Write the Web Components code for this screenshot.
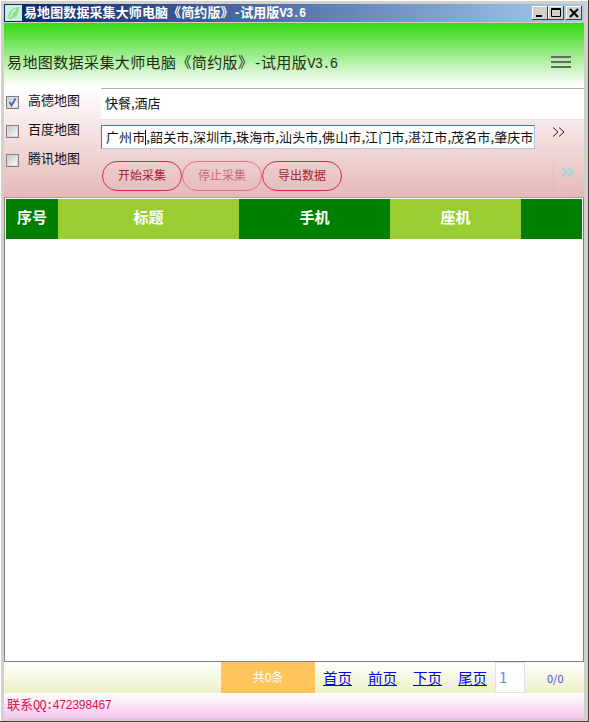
<!DOCTYPE html>
<html lang="zh">
<head>
<meta charset="utf-8">
<title>易地图数据采集大师电脑</title>
<style>
html, body { margin: 0; padding: 0; }
body { font-family: "Noto Sans CJK SC", sans-serif; }
/* half-width latin of the original bitmap font */
.lat { font-family: "Liberation Mono", monospace; font-size: .92em; letter-spacing: -.055em; }
</style>
</head>
<body>
<app-window>
    <title-bar slot="title">易地图数据采集大师电脑《简约版》<span class="lat">-</span>试用版<span class="lat">V3.6</span></title-bar>
    <app-header>易地图数据采集大师电脑《简约版》<span class="lat">-</span>试用版<span class="lat">V3.6</span></app-header>
    <search-panel></search-panel>
    <data-grid></data-grid>
    <pager-bar></pager-bar>
    <status-bar>联系<span class="lat">QQ:472398467</span></status-bar>
</app-window>

<script>
const FONT = '"Noto Sans CJK SC", "Liberation Sans", sans-serif';

class AppWindow extends HTMLElement {
    connectedCallback() {
        this.attachShadow({ mode: 'open' });
        this.shadowRoot.innerHTML = `
            <style>
                :host {
                    display: flex;
                    flex-direction: column;
                    box-sizing: border-box;
                    width: 589px;
                    height: 722px;
                    padding: 4px 4px 2px 4px;
                    background: #d4d0c8;
                    border-right: 1px solid #404040;
                    border-bottom: 1px solid #404040;
                    box-shadow: inset 1px 1px 0 #fff;
                    font-family: ${FONT};
                    overflow: hidden;
                }
            </style>
            <slot name="title"></slot>
            <slot></slot>
        `;
    }
}

class TitleBar extends HTMLElement {
    connectedCallback() {
        this.attachShadow({ mode: 'open' });
        this.shadowRoot.innerHTML = `
            <style>
                :host {
                    display: flex;
                    align-items: center;
                    flex: 0 0 18px;
                    height: 18px;
                    margin-bottom: 1px;
                    padding: 0 2px 0 0;
                    background: linear-gradient(90deg, #0a246a, #a6caf0);
                    color: #fff;
                    font-size: 13px;
                    font-weight: 700;
                    letter-spacing: .1px;
                    line-height: 18px;
                    white-space: nowrap;
                }
                svg { flex: none; margin: 0 2px 0 1px; }
                .text { flex: 1; }
                .btns { display: flex; }
                .btn {
                    box-sizing: border-box;
                    width: 16px;
                    height: 14px;
                    background: #d4d0c8;
                    box-shadow: inset -1px -1px 0 #404040, inset 1px 1px 0 #fff;
                }
                .btn svg { display: block; margin: 0; }
                .btn + .btn:last-child { margin-left: 2px; }
            </style>
            <svg width="17" height="16" viewBox="0 0 17 16">
                <rect width="17" height="16" fill="#c9f0d2"/>
                <path d="M4 14C2 9 6 3 14 2c0 5-2 10-6 11-1 .4-3 .6-4 1z" fill="#8fdc9c"/>
                <path d="M6 12C6 8 8 6 11 4.500" stroke="#d8f8dc" stroke-width="1.500" fill="none"/>
            </svg>
            <span class="text"><slot></slot></span>
            <div class="btns">
                <div class="btn"><svg width="16" height="14"><rect x="4" y="9" width="6" height="2" fill="#000"/></svg></div>
                <div class="btn"><svg width="16" height="14"><path d="M3.500 2.500h9v8h-9zM3 3.500h10" fill="none" stroke="#000"/></svg></div>
                <div class="btn"><svg width="16" height="14"><path d="M4 3l8 8M12 3l-8 8" fill="none" stroke="#000" stroke-width="2"/></svg></div>
            </div>
        `;
    }
}

class AppHeader extends HTMLElement {
    connectedCallback() {
        this.attachShadow({ mode: 'open' });
        this.shadowRoot.innerHTML = `
            <style>
                :host {
                    display: flex;
                    align-items: center;
                    justify-content: space-between;
                    flex: 0 0 64px;
                    box-sizing: border-box;
                    padding: 13px 13px 0 3px;
                    background: linear-gradient(180deg, #33d80f 0%, #ffffff 97%);
                    color: #1f2f12;
                    font-size: 15px;
                    letter-spacing: .4px;
                    white-space: nowrap;
                }
                .menu { width: 20px; height: 12px; display: flex; flex-direction: column; justify-content: space-between; }
                .menu i { display: block; height: 2px; background: #666; }
            </style>
            <span><slot></slot></span>
            <div class="menu"><i></i><i></i><i></i></div>
        `;
    }
}

class MapCheck extends HTMLElement {
    connectedCallback() {
        const checked = this.hasAttribute('checked');
        this.attachShadow({ mode: 'open' });
        this.shadowRoot.innerHTML = `
            <style>
                :host {
                    display: flex;
                    align-items: center;
                    height: 29px;
                    gap: 9px;
                    color: #111;
                    font-size: 13px;
                }
                .box {
                    box-sizing: border-box;
                    width: 13px;
                    height: 13px;
                    border: 1px solid #808080;
                    background: linear-gradient(135deg, #c4c4c4, #fff);
                    box-shadow: inset 0 0 0 1px #d8d8d8;
                    display: block;
                }
                .label { margin-top: -6px; }
            </style>
            <svg class="box" viewBox="0 0 11 11">
                ${checked ? '<path d="M2.500 5l2 3.500 4-7" fill="none" stroke="#4a5fa8" stroke-width="1.700"/>' : ''}
            </svg>
            <span class="label"><slot></slot></span>
        `;
    }
}

class TextField extends HTMLElement {
    connectedCallback() {
        this.attachShadow({ mode: 'open' });
        this.shadowRoot.innerHTML = `
            <style>
                :host {
                    display: block;
                    box-sizing: border-box;
                    min-width: 0;
                    background: #fff;
                    padding: 0 4px;
                    font-size: 13px;
                    color: #111;
                    white-space: nowrap;
                    overflow: hidden;
                }
                :host([tall]) {
                    height: 32px;
                    line-height: 28px;
                    border-top: 1px solid #b0b0b0;
                    border-bottom: 1px solid #dde3ee;
                }
                :host([focused]) {
                    height: 24px;
                    line-height: 22px;
                    padding: 0 1px 0 4px;
                    letter-spacing: .1px;
                    border: 1px solid #a9c8e4;
                    border-top-color: #3c7fb1;
                    border-left-color: #3c7fb1;
                }
            </style>
            <slot></slot>
        `;
    }
}

class PillButton extends HTMLElement {
    connectedCallback() {
        this.attachShadow({ mode: 'open' });
        this.shadowRoot.innerHTML = `
            <style>
                :host {
                    display: flex;
                    align-items: center;
                    justify-content: center;
                    box-sizing: border-box;
                    width: 80px;
                    height: 30px;
                    padding-bottom: 3px;
                    border: 1px solid #e0284f;
                    border-radius: 15px;
                    color: #a8222e;
                    font-size: 12px;
                }
                :host([disabled]) {
                    border-color: #e4708c;
                    color: #c86a74;
                }
            </style>
            <slot></slot>
        `;
    }
}

class SearchPanel extends HTMLElement {
    connectedCallback() {
        this.attachShadow({ mode: 'open' });
        this.shadowRoot.innerHTML = `
            <style>
                :host {
                    display: grid;
                    grid-template-columns: 97px minmax(0, 1fr) 49px;
                    grid-template-rows: 32px 41px 1fr;
                    flex: 0 0 110px;
                    box-sizing: border-box;
                    padding-top: 1px;
                    background: linear-gradient(180deg, #ffffff 0%, #e6b8b8 100%);
                }
                .checks { grid-row: 1 / 4; padding: 0 0 0 2px; }
                .wide { grid-column: 2 / 4; }
                .row { display: flex; align-items: flex-start; min-width: 0; padding-top: 5px; }
                .row text-field { flex: 1; }
                .caret { display: inline-block; width: 0; height: 15px; border-left: 1px solid #111; vertical-align: -3px; }
                .buttons { display: flex; padding-left: 1px; grid-column: 2; }
                .more svg { display: block; margin: 7px 0 0 17px; }
                .more.dim { box-shadow: inset 1px 0 0 rgba(200, 160, 160, .25); height: 30px; margin-left: 18px; }
                .more.dim svg { margin: 6px 0 0 8px; }
            </style>
            <div class="checks">
                <map-check checked>高德地图</map-check>
                <map-check>百度地图</map-check>
                <map-check>腾讯地图</map-check>
            </div>
            <text-field class="wide" tall>快餐,酒店</text-field>
            <div class="row"><text-field focused>广州市<span class="caret"></span>,韶关市,深圳市,珠海市,汕头市,佛山市,江门市,湛江市,茂名市,肇庆市</text-field></div>
            <div class="more">
                <svg width="13" height="10" viewBox="0 0 13 10"><path d="M1 .5l5 4.500-5 4.500M7 .5l5 4.500-5 4.500" fill="none" stroke="#222"/></svg>
            </div>
            <div class="buttons">
                <pill-button>开始采集</pill-button>
                <pill-button disabled>停止采集</pill-button>
                <pill-button>导出数据</pill-button>
            </div>
            <div class="more dim">
                <svg width="13" height="10" viewBox="0 0 13 10"><path d="M1 .5l5 4.500-5 4.500M7 .5l5 4.500-5 4.500" fill="none" stroke="#35eef5"/></svg>
            </div>
        `;
    }
}

class DataGrid extends HTMLElement {
    connectedCallback() {
        this.attachShadow({ mode: 'open' });
        this.shadowRoot.innerHTML = `
            <style>
                :host {
                    display: block;
                    flex: 1;
                    min-height: 0;
                    box-sizing: border-box;
                    background: #fff;
                    border: 1px solid #808080;
                    border-top-color: #a0a0a0;
                    padding: 1px;
                }
                .head {
                    display: grid;
                    grid-template-columns: 52px 181px 151px 131px 1fr;
                    height: 40px;
                    color: #fff;
                    font-size: 15px;
                    font-weight: 700;
                }
                .head div { display: flex; align-items: center; justify-content: center; padding-bottom: 6px; background: #008000; }
                .head div:nth-child(even) { background: #9acd32; }
            </style>
            <div class="head">
                <div>序号</div><div>标题</div><div>手机</div><div>座机</div><div></div>
            </div>
        `;
    }
}

class PagerBar extends HTMLElement {
    connectedCallback() {
        this.attachShadow({ mode: 'open' });
        this.shadowRoot.innerHTML = `
            <style>
                :host {
                    display: flex;
                    align-items: center;
                    flex: 0 0 31px;
                    background: linear-gradient(180deg, #ffffff 0%, #eef0c6 100%);
                    font-size: 14.500px;
                }
                .count {
                    align-self: stretch;
                    display: flex;
                    align-items: center;
                    justify-content: center;
                    box-sizing: border-box;
                    margin-left: 217px;
                    width: 94px;
                    padding-bottom: 3px;
                    background: #ffc55c;
                    color: #fff;
                    font-size: 12px;
                }
                a { color: #00e; text-decoration: underline; margin: 0 8px; white-space: nowrap; width: 29px; }
                .page {
                    box-sizing: border-box;
                    width: 30px;
                    height: 31px;
                    padding-left: 3px;
                    background: #fff;
                    border: 1px solid #dde3ee;
                    color: #6a90e0;
                    font-size: 15px;
                    line-height: 28px;
                }
                .total { color: #4a4ae8; font-size: 11px; margin-left: 22px; }
            </style>
            <div class="count">共0条</div>
            <a href="#">首页</a><a href="#">前页</a><a href="#">下页</a><a href="#">尾页</a>
            <div class="page">1</div>
            <div class="total">0/0</div>
        `;
    }
}

class StatusBar extends HTMLElement {
    connectedCallback() {
        this.attachShadow({ mode: 'open' });
        this.shadowRoot.innerHTML = `
            <style>
                :host {
                    display: flex;
                    align-items: center;
                    flex: 0 0 26px;
                    box-sizing: border-box;
                    padding: 0 0 6px 3px;
                    background: linear-gradient(180deg, #ffffff 0%, #f3c4ee 100%);
                    color: #e0144c;
                    font-size: 13px;
                    white-space: nowrap;
                }
            </style>
            <span><slot></slot></span>
        `;
    }
}

customElements.define('app-window', AppWindow);
customElements.define('title-bar', TitleBar);
customElements.define('app-header', AppHeader);
customElements.define('map-check', MapCheck);
customElements.define('text-field', TextField);
customElements.define('pill-button', PillButton);
customElements.define('search-panel', SearchPanel);
customElements.define('data-grid', DataGrid);
customElements.define('pager-bar', PagerBar);
customElements.define('status-bar', StatusBar);
</script>
</body>
</html>
